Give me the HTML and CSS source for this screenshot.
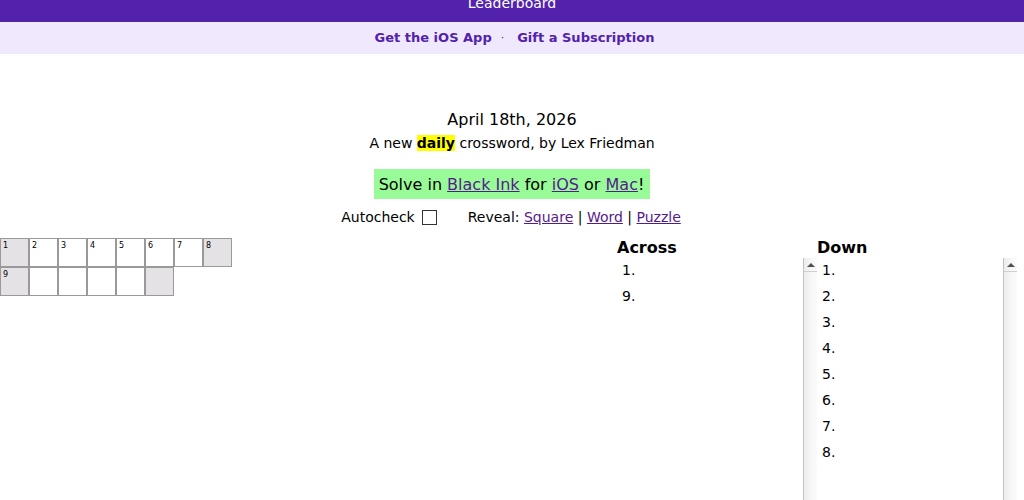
FILE: index.html
```html
<!DOCTYPE html>
<html>
<head>
<meta charset="utf-8">
<link rel="stylesheet" href="styles.css">
</head>
<body>
<header class="topbar"><span class="topbar-text">Leaderboard</span></header>
<nav class="subbar">
  <a class="sublink" href="#">Get the iOS App</a>
  <span class="subsep">·</span>
  <a class="sublink" href="#">Gift a Subscription</a>
</nav>
<main class="intro">
  <div class="date">April 18th, 2026</div>
  <div class="byline">A new <b class="hl">daily</b> crossword, by Lex Friedman</div>
  <div class="promo">Solve in <a href="#">Black Ink</a> for <a href="#">iOS</a> or <a href="#">Mac</a>!</div>
  <div class="controls">
    <label class="autocheck">Autocheck <input type="checkbox" class="check"></label>
    <span class="reveal">Reveal: <a href="#">Square</a> | <a href="#">Word</a> | <a href="#">Puzzle</a></span>
  </div>
</main>
<section class="play">
  <div class="grid">
    <div class="cell block"><span class="num">1</span></div>
    <div class="cell"><span class="num">2</span></div>
    <div class="cell"><span class="num">3</span></div>
    <div class="cell"><span class="num">4</span></div>
    <div class="cell"><span class="num">5</span></div>
    <div class="cell"><span class="num">6</span></div>
    <div class="cell"><span class="num">7</span></div>
    <div class="cell block"><span class="num">8</span></div>
    <div class="cell block"><span class="num">9</span></div>
    <div class="cell"></div>
    <div class="cell"></div>
    <div class="cell"></div>
    <div class="cell"></div>
    <div class="cell block"></div>
  </div>
  <div class="clues">
    <div class="clue-col">
      <h3 class="clue-head">Across</h3>
      <div class="clue-box">
        <ul class="clue-list">
          <li>1.</li>
          <li>9.</li>
        </ul>
        <div class="sbar"><div class="sbar-btn"><span class="sbar-arrow"></span></div></div>
      </div>
    </div>
    <div class="clue-col">
      <h3 class="clue-head">Down</h3>
      <div class="clue-box">
        <ul class="clue-list">
          <li>1.</li>
          <li>2.</li>
          <li>3.</li>
          <li>4.</li>
          <li>5.</li>
          <li>6.</li>
          <li>7.</li>
          <li>8.</li>
        </ul>
        <div class="sbar"><div class="sbar-btn"><span class="sbar-arrow"></span></div></div>
      </div>
    </div>
  </div>
</section>
</body>
</html>
```

FILE: styles.css
```css
html, body {
  margin: 0;
  padding: 0;
  background: #fff;
  font-family: "DejaVu Sans", Verdana, sans-serif;
  color: #000;
  overflow: hidden;
}
a { color: #551a8b; }

.topbar {
  height: 22px;
  background: #5222ad;
  display: flex;
  flex-direction: column;
  justify-content: flex-end;
  align-items: center;
  overflow: hidden;
  box-sizing: border-box;
  padding-bottom: 10px;
}
.topbar-text {
  color: #fff;
  font-size: 14px;
  line-height: 17px;
}

.subbar {
  height: 32px;
  background: #f0e8fc;
  display: flex;
  justify-content: center;
  align-items: center;
  font-size: 13px;
  font-weight: bold;
  padding: 0 0 1px 5px;
  box-sizing: border-box;
}
.sublink { color: #5222ad; text-decoration: none; }
.subsep { color: #5222ad; font-weight: normal; font-size: 11px; margin: 0 13px 0 9px; }

.intro {
  display: flex;
  flex-direction: column;
  align-items: center;
  padding-top: 56px;
}
.date {
  font-size: 16px;
  line-height: 19px;
}
.byline {
  font-size: 14px;
  line-height: 17px;
  margin-top: 6px;
}
.hl { background: #ffff00; }
.promo {
  margin-top: 17px;
  background: #98fb98;
  font-size: 16px;
  line-height: 19px;
  padding: 6px 6px 5px 5px;
}
.controls {
  margin-top: 10px;
  font-size: 14px;
  line-height: 17px;
  display: flex;
  align-items: center;
  gap: 31px;
  padding-right: 2px;
}
.autocheck { display: flex; align-items: center; gap: 7px; }
.check {
  appearance: none;
  -webkit-appearance: none;
  width: 15px;
  height: 15px;
  margin: 0;
  border: 1px solid #333;
  background: #fff;
  box-sizing: border-box;
}

.play {
  display: flex;
  margin-top: 12px;
  padding-right: 7px;
}
.grid {
  flex: 1;
  display: grid;
  grid-template-columns: repeat(8, 29px);
  grid-auto-rows: 29px;
  align-content: start;
}
.cell {
  box-sizing: border-box;
  border: 1px solid #999;
  background: #fff;
  padding: 2px 0 0 2px;
  font-size: 8px;
  line-height: 9px;
}
.cell.block { background: #e4e2e4; }
.num { color: #000; }

.clues { display: flex; }
.clue-col { width: 200px; }
.clue-head {
  margin: 0;
  font-size: 16px;
  line-height: 19px;
  font-weight: bold;
  height: 20px;
}
.clue-box {
  display: flex;
  height: 320px;
}
.clue-list {
  flex: 1;
  list-style: none;
  margin: 0;
  padding: 0;
  font-size: 14px;
}
.clue-list li {
  line-height: 24px;
  padding: 0 0 2px 5px;
}
.sbar {
  width: 13px;
  border-left: 1px solid #c4c4c4;
  background: linear-gradient(to right, #ececec, #f7f7f7 60%, #fbfbfb);
}
.sbar-btn {
  height: 13px;
  border-bottom: 1px solid #d0d0d0;
  display: flex;
  justify-content: center;
  align-items: center;
}
.sbar-arrow {
  width: 0;
  height: 0;
  border-left: 4px solid transparent;
  border-right: 4px solid transparent;
  border-bottom: 4px solid #505050;
}
```
